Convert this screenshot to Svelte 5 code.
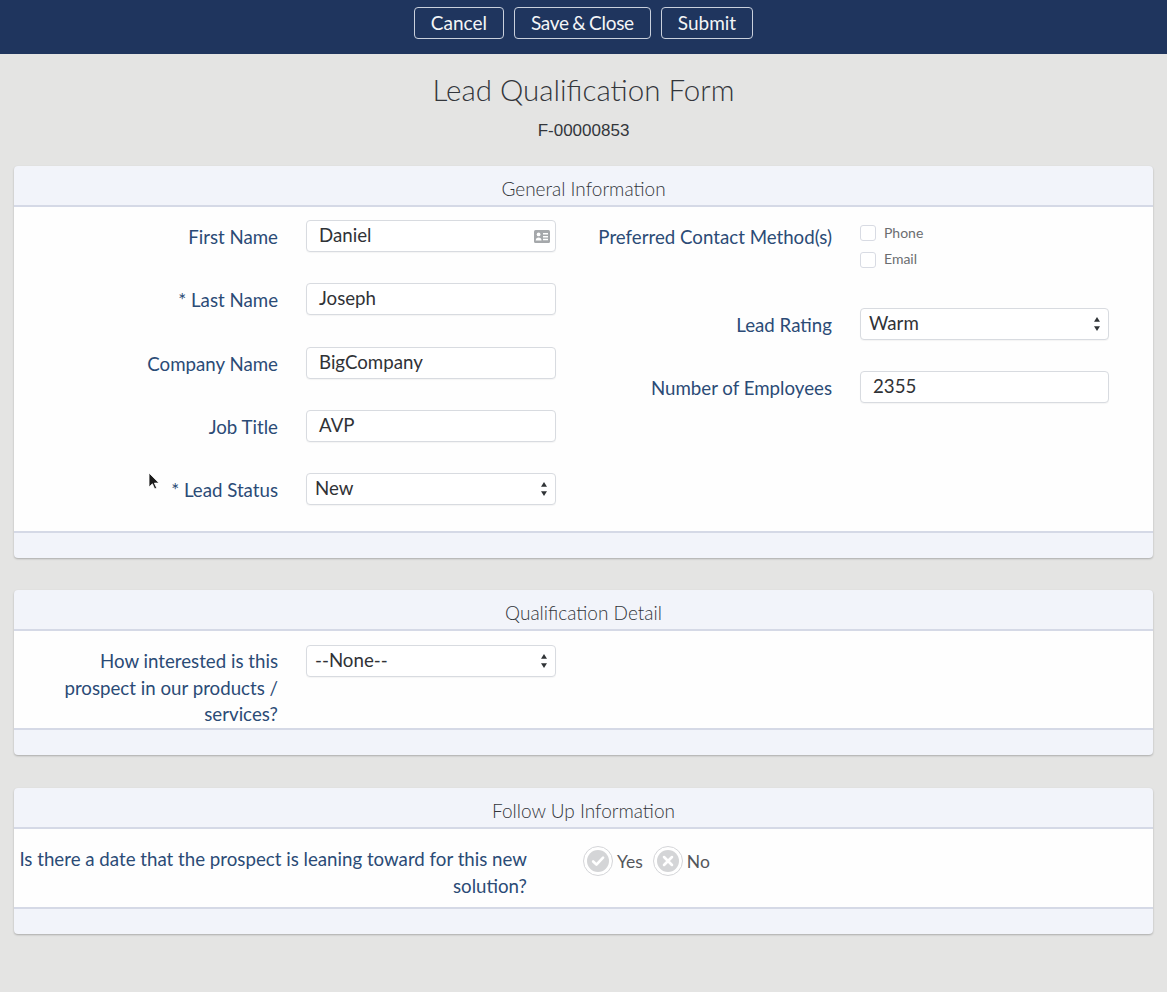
<script>
  const left = [
    { label: 'First Name', value: 'Daniel', icon: true },
    { label: '* Last Name', value: 'Joseph' },
    { label: 'Company Name', value: 'BigCompany' },
    { label: 'Job Title', value: 'AVP' },
    { label: '* Lead Status', value: 'New', select: true }
  ];
</script>

{#snippet arrows()}
  <svg class="arrows" width="8" height="16" viewBox="0 0 8 16" aria-hidden="true">
    <path d="M4 1 7 5.8H1z" /><path d="M4 15 1 10.2h6z" />
  </svg>
{/snippet}

<div class="page">
  <header class="bar">
    <button>Cancel</button>
    <button class="save">Save &amp; Close</button>
    <button>Submit</button>
  </header>

  <h1>Lead Qualification Form</h1>
  <div class="num">F-00000853</div>

  <main>
    <section class="card">
      <h2>General Information</h2>
      <div class="body general">
        <div class="col">
          {#each left as f}
            <div class="field">
              <div class="label">{f.label}</div>
              <div class="control" class:sel={f.select}>
                <span>{f.value}</span>
                {#if f.icon}
                  <svg class="card-icon" width="16" height="13" viewBox="0 0 16 13" aria-hidden="true">
                    <rect width="16" height="13" rx="1.5" fill="#a5a8ab" />
                    <circle cx="4.6" cy="4.4" r="1.9" fill="#fff" />
                    <path d="M1.7 10.4c0-2 1.2-3 2.9-3s2.9 1 2.9 3z" fill="#fff" />
                    <path d="M9 3h5v1.5H9zM9 5.9h5v1.5H9zM9 8.8h5v1.5H9z" fill="#fff" />
                  </svg>
                {/if}
                {#if f.select}{@render arrows()}{/if}
              </div>
            </div>
          {/each}
        </div>
        <div class="col right">
          <div class="field contact">
            <div class="label">Preferred Contact Method(s)</div>
            <div class="checks">
              <div class="check"><i></i><span>Phone</span></div>
              <div class="check"><i></i><span>Email</span></div>
            </div>
          </div>
          <div class="field">
            <div class="label">Lead Rating</div>
            <div class="control sel"><span>Warm</span>{@render arrows()}</div>
          </div>
          <div class="field">
            <div class="label">Number of Employees</div>
            <div class="control"><span>2355</span></div>
          </div>
        </div>
      </div>
      <div class="foot"></div>
    </section>

    <section class="card">
      <h2>Qualification Detail</h2>
      <div class="body qual">
        <div class="field">
          <div class="label">How interested is this prospect in our products / services?</div>
          <div class="control sel"><span>--None--</span>{@render arrows()}</div>
        </div>
      </div>
      <div class="foot"></div>
    </section>

    <section class="card last">
      <h2>Follow Up Information</h2>
      <div class="body follow">
        <div class="label">Is there a date that the prospect is leaning toward for this new solution?</div>
        <div class="radios">
          <div class="radio">
            <span class="circle">
              <svg width="22" height="22" viewBox="0 0 20 20" aria-hidden="true">
                <circle cx="10" cy="10" r="10" fill="#d4d5d7" />
                <path d="M5.6 10.4 8.6 13.3 14.6 7" fill="none" stroke="#fff" stroke-width="2.4" stroke-linecap="round" stroke-linejoin="round" />
              </svg>
            </span>Yes
          </div>
          <div class="radio">
            <span class="circle">
              <svg width="22" height="22" viewBox="0 0 20 20" aria-hidden="true">
                <circle cx="10" cy="10" r="10" fill="#d4d5d7" />
                <path d="M6.4 6.4 13.6 13.6M13.6 6.4 6.4 13.6" fill="none" stroke="#fff" stroke-width="2.4" stroke-linecap="round" />
              </svg>
            </span>No
          </div>
        </div>
      </div>
      <div class="foot"></div>
    </section>
  </main>

  <svg class="cursor" width="12" height="19" viewBox="0 0 12 19" aria-hidden="true">
    <path d="M1 1v14l3.4-3.2 2.3 5.2 2-.9-2.3-5H11z" fill="#1a1a1a" stroke="#fff" stroke-width=".8" />
  </svg>
</div>

<style>
  :global(body) {
    margin: 0;
    background: #e4e4e3;
  }
  .page {
    position: relative;
    min-height: 992px;
    background: #e4e4e3;
    font-family: Lato, "Open Sans", sans-serif;
    color: #36393c;
  }
  .bar {
    height: 54px;
    box-sizing: border-box;
    background: #1f355e;
    display: flex;
    justify-content: center;
    align-items: flex-start;
    gap: 10px;
    padding-top: 7px;
  }
  button {
    height: 32px;
    padding: 0 16px;
    border: 1px solid #c9d0dc;
    border-radius: 4px;
    background: transparent;
    color: #f4f5f7;
    font: 19px/30px Lato, "Open Sans", sans-serif;
  }
  button.save {
    letter-spacing: -0.3px;
    word-spacing: -1px;
  }
  h1 {
    margin: 0;
    padding-top: 15px;
    height: 42px;
    font-weight: 300;
    font-size: 29.5px;
    line-height: 42px;
    text-align: center;
    color: #33363b;
  }
  .num {
    margin-top: 9px;
    height: 22px;
    text-align: center;
    font: 17px/22px "Liberation Sans", Arial, sans-serif;
    color: #33363b;
  }
  main {
    padding: 24px 14px 0;
    display: flex;
    flex-direction: column;
    gap: 32px;
  }
  .card {
    border-radius: 4px;
    background: #f2f4fa;
    box-shadow: 0 1px 2px rgba(0, 0, 0, 0.25);
    overflow: hidden;
  }
  .card.last {
    margin-top: 1px;
  }
  h2 {
    margin: 0;
    height: 41px;
    box-sizing: border-box;
    border-bottom: 2px solid #d5d9e6;
    padding-top: 9px;
    font-weight: 300;
    font-size: 19px;
    line-height: 27px;
    text-align: center;
    color: #33363b;
  }
  .body {
    background: #fefefe;
    border-bottom: 2px solid #d5d9e6;
    box-sizing: border-box;
  }
  .foot {
    height: 25px;
  }
  .general {
    height: 326px;
    display: flex;
    padding-top: 13px;
    gap: 12px;
  }
  .col {
    width: 542px;
  }
  .field {
    display: grid;
    grid-template-columns: 264px 250px;
    column-gap: 28px;
    align-items: start;
    height: 63.25px;
  }
  .right .field {
    grid-template-columns: 264px 249px;
  }
  .label {
    color: #2b4b76;
    font-size: 18.7px;
    line-height: 26.5px;
    text-align: right;
    padding-top: 4px;
  }
  .control {
    height: 32px;
    box-sizing: border-box;
    border: 1px solid #d8dbe0;
    border-radius: 4px;
    background: #fff;
    padding: 0 12px 2px;
    display: flex;
    align-items: center;
    justify-content: space-between;
    font-size: 18.7px;
    line-height: 26px;
    color: #303236;
    box-shadow: 0 1px 1px rgba(0, 0, 0, 0.04);
  }
  .control.sel {
    padding: 0 7px 2px 8px;
  }
  .control svg {
    position: relative;
    top: 1px;
  }
  .card-icon {
    margin-right: -7px;
  }
  .arrows path {
    fill: #2f3336;
  }
  .right .contact {
    height: 88px;
  }
  .checks {
    padding-top: 5px;
    display: flex;
    flex-direction: column;
    gap: 10.5px;
  }
  .check {
    display: flex;
    align-items: center;
    height: 16px;
    gap: 8px;
    font-size: 14px;
    color: #6b6d70;
  }
  .check span {
    position: relative;
    top: -1px;
  }
  .check i {
    width: 16px;
    height: 16px;
    box-sizing: border-box;
    border: 1px solid #d8dbe3;
    border-radius: 3px;
    background: #fff;
  }
  .qual {
    height: 99px;
    padding-top: 14px;
  }
  .qual .field {
    height: auto;
    width: 542px;
  }
  .qual .label {
    padding-top: 3px;
    padding-left: 30px;
  }
  .follow {
    height: 80px;
    display: flex;
    align-items: flex-start;
    padding-top: 14px;
  }
  .follow .label {
    width: 513px;
    padding-top: 3px;
    flex: none;
  }
  .radios {
    display: flex;
    margin-left: 56px;
    gap: 10px;
    padding-top: 3px;
  }
  .radio {
    display: flex;
    align-items: center;
    gap: 4px;
    font-size: 17.5px;
    color: #54575b;
  }
  .circle {
    width: 30px;
    height: 30px;
    box-sizing: border-box;
    border: 1px solid #d5d6d9;
    border-radius: 50%;
    display: flex;
    align-items: center;
    justify-content: center;
    background: #fff;
  }
  .cursor {
    position: absolute;
    left: 148px;
    top: 472px;
  }
</style>
